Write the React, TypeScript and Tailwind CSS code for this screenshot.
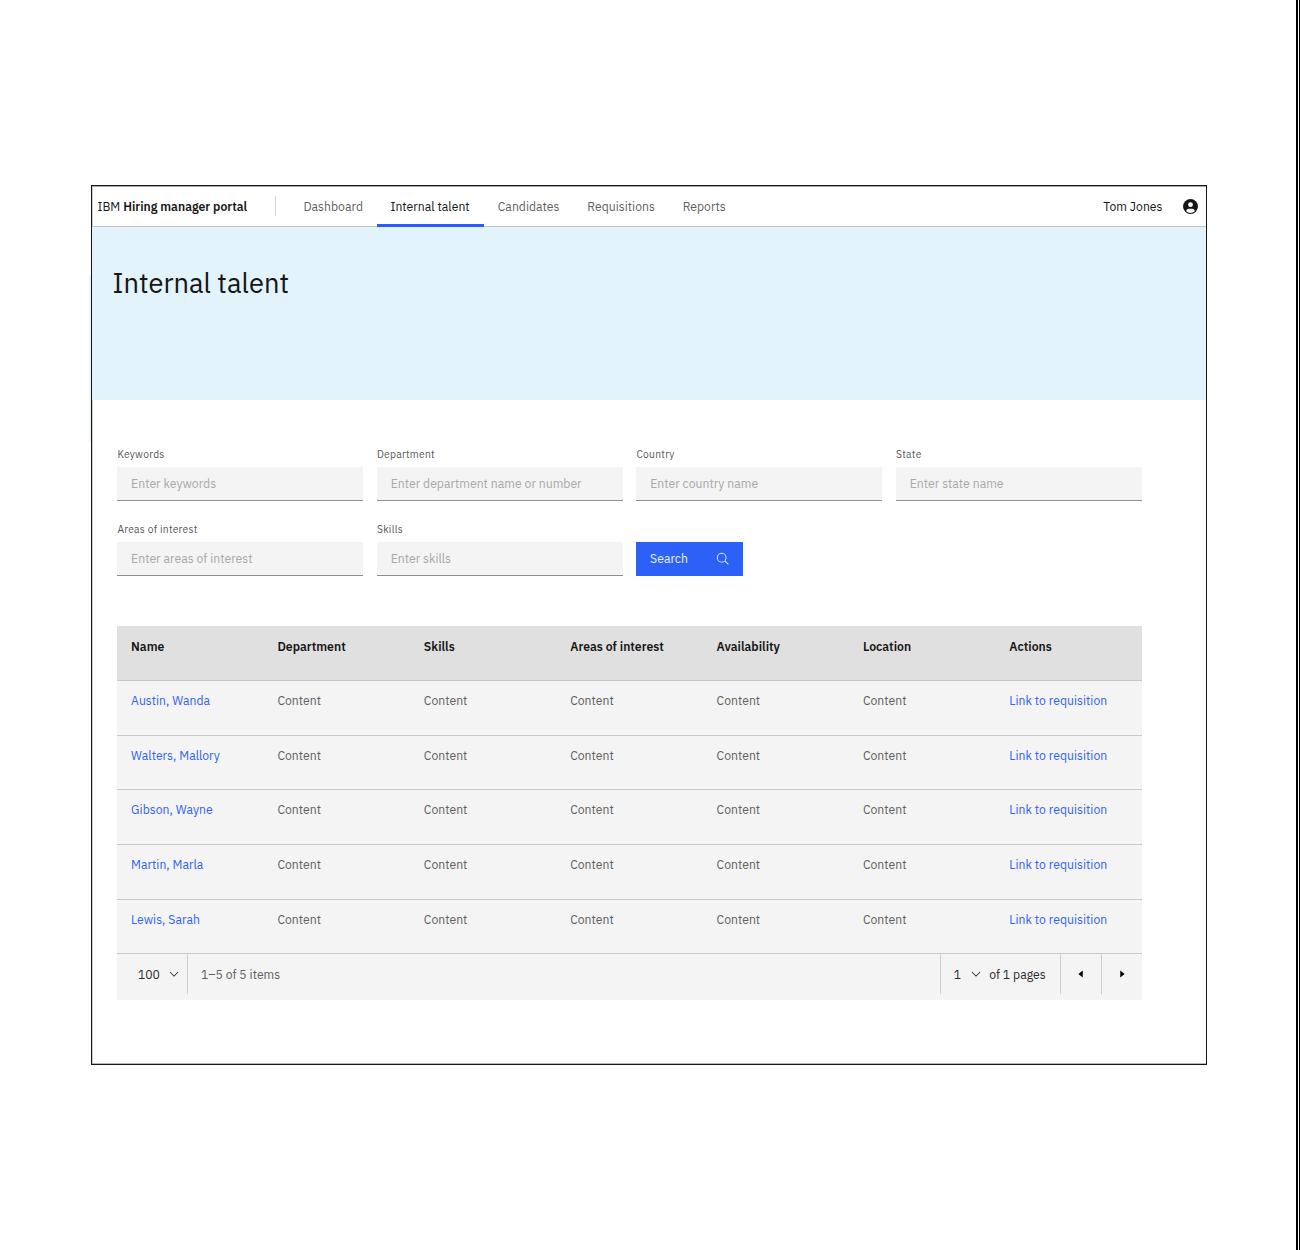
const navItems = ["Dashboard", "Internal talent", "Candidates", "Requisitions", "Reports"];

const fields = [
  { label: "Keywords", placeholder: "Enter keywords" },
  { label: "Department", placeholder: "Enter department name or number" },
  { label: "Country", placeholder: "Enter country name" },
  { label: "State", placeholder: "Enter state name" },
  { label: "Areas of interest", placeholder: "Enter areas of interest" },
  { label: "Skills", placeholder: "Enter skills" },
];

const columns = ["Name", "Department", "Skills", "Areas of interest", "Availability", "Location", "Actions"];

const people = ["Austin, Wanda", "Walters, Mallory", "Gibson, Wayne", "Martin, Marla", "Lewis, Sarah"];

function AvatarIcon() {
  return (
    <svg viewBox="0 0 32 32" className="h-[17px] w-[17px]" aria-hidden>
      <circle cx="16" cy="16" r="14" fill="#161616" />
      <circle cx="16" cy="12.5" r="4.5" fill="#fff" />
      <path
        d="M8.007 24.93A4.996 4.996 0 0 1 13 20h6a4.996 4.996 0 0 1 4.993 4.93 11.94 11.94 0 0 1-15.986 0Z"
        fill="#fff"
      />
    </svg>
  );
}

function SearchIcon() {
  return (
    <svg viewBox="0 0 32 32" className="h-[14px] w-[14px]" fill="currentColor" aria-hidden>
      <path d="M29 27.586l-7.552-7.552a11.018 11.018 0 1 0-1.414 1.414L27.586 29ZM4 13a9 9 0 1 1 9 9 9.01 9.01 0 0 1-9-9Z" />
    </svg>
  );
}

function ChevronIcon() {
  return (
    <svg viewBox="0 0 16 16" className="h-[14px] w-[14px]" fill="currentColor" aria-hidden>
      <path d="M8 11 3 6l.7-.7L8 9.6l4.3-4.3.7.7z" />
    </svg>
  );
}

function CaretIcon({ direction }: { direction: "left" | "right" }) {
  return (
    <svg viewBox="0 0 32 32" className="h-[14px] w-[14px]" aria-hidden>
      <path d={direction === "left" ? "M20 24 10 16l10-8z" : "M12 8l10 8-10 8z"} fill="#000" />
    </svg>
  );
}

function Header() {
  return (
    <header className="flex h-[41px] border-b border-[#c3c7ca] pl-[5.5px] pr-[7px]">
      <div className="flex w-[177.5px] items-center whitespace-pre pt-px text-[#161616]">
        IBM <span className="font-semibold">Hiring manager portal</span>
      </div>
      <div className="mt-[10px] h-5 w-px bg-[#d5d5d5]" />
      <nav className="ml-[13.5px] flex" aria-label="Main">
        {navItems.map((item) => (
          <a
            key={item}
            href="#"
            className={
              item === "Internal talent"
                ? "mb-[-1px] flex h-[41px] w-[107px] items-center border-b-[3px] border-[#2a5cff] px-[13.65px] pt-[3px] text-[#161616]"
                : "flex h-10 items-center px-[13.9px] pt-px text-[#5f5f5f]"
            }
          >
            {item}
          </a>
        ))}
      </nav>
      <div className="ml-auto flex items-center gap-[19.5px] text-[#161616]">
        <span className="pt-px">Tom Jones</span>
        <AvatarIcon />
      </div>
    </header>
  );
}

function SearchForm() {
  return (
    <form className="ml-[25.4px] mt-[46px] grid w-[1024.6px] grid-cols-4 gap-x-[13.6px] gap-y-[20px]">
      {fields.map(({ label, placeholder }) => (
        <label key={label} className="flex h-[55px] flex-col justify-between">
          <span className="text-[10.24px] leading-[18px] tracking-[0.27px] text-[#565656]">{label}</span>
          <input
            type="text"
            placeholder={placeholder}
            className="h-[34px] w-full border-b border-[#8f8f8f] bg-[#f4f4f4] px-[13.7px] pb-[1.5px] tracking-[0.02px] outline-none placeholder:text-[#a8a8a8]"
          />
        </label>
      ))}
      <button
        type="button"
        className="flex h-[34px] w-[106.7px] items-center justify-between self-end bg-[#2d60f6] px-[13.6px] tracking-[0.02px] text-white/90"
      >
        <span className="pb-[1.5px]">Search</span>
        <SearchIcon />
      </button>
    </form>
  );
}

function TalentTable() {
  return (
    <div className="mt-[50px] ml-[25.4px] w-[1024.6px] bg-[#f4f4f4]">
      <div className="grid h-[55.2px] grid-cols-7 border-b border-[#c6c6c6] bg-[#e0e0e0]">
        {columns.map((column) => (
          <div key={column} className="pl-[13.7px] pt-[11.4px] font-semibold leading-[18px] text-[#161616]">
            {column}
          </div>
        ))}
      </div>
      {people.map((name) => (
        <div key={name} className="grid h-[54.6px] grid-cols-7 border-b border-[#c9c9c9] pt-[10px] leading-[18px] text-[#5f5f5f]">
          <a href="#" className="pl-[13.7px] text-[#3062f5]">{name}</a>
          {columns.slice(1, -1).map((column) => (
            <span key={column} className="pl-[13.7px]">Content</span>
          ))}
          <a href="#" className="pl-[13.7px] text-[#3062f5]">Link to requisition</a>
        </div>
      ))}
      <Pagination />
    </div>
  );
}

function Pagination() {
  return (
    <div className="flex h-[46px] pb-[6px] text-[#2b2b2b]">
      <div className="flex w-[71px] items-center border-r border-[#cfcfcf] pl-[20.5px]">
        <span className="w-[29px]">100</span>
        <ChevronIcon />
      </div>
      <div className="flex items-center pl-[12.6px] text-[#5f5f5f]">1–5 of 5 items</div>
      <div className="ml-auto flex w-[121px] items-center border-x border-[#cfcfcf] pl-[12.8px]">
        <span className="w-[15px]">1</span>
        <ChevronIcon />
        <span className="ml-[6.4px]">of 1 pages</span>
      </div>
      <button type="button" aria-label="Previous page" className="flex w-[41px] items-center justify-center border-r border-[#cfcfcf]">
        <CaretIcon direction="left" />
      </button>
      <button type="button" aria-label="Next page" className="flex w-[40px] items-center justify-center">
        <CaretIcon direction="right" />
      </button>
    </div>
  );
}

export default function App() {
  return (
    <div className="flex h-[1250px] w-[1300px] overflow-hidden bg-white font-['IBM_Plex_Sans','Noto_Sans',sans-serif] text-[12.2px] tracking-[0.02px]">
      <div className="mt-[275px] ml-[89px] h-[166px] w-[2px] bg-[#edf5ff]" />
      <main className="mt-[185px] h-[880px] w-[1116px] border border-[#161616] bg-white shadow-[inset_0_1px_#a8a8a8,inset_0_-1px_#b5b5b5,inset_1px_0_#cccccc]">
        <Header />
        <div className="h-[173px] bg-[#e3f3fc] pl-[20.5px] pt-[37.5px]">
          <h1 className="text-[27.3px] leading-9 tracking-normal text-[#161616]">Internal talent</h1>
        </div>
        <SearchForm />
        <TalentTable />
      </main>
      <div className="ml-auto w-1 border-l-2 border-r border-black" />
    </div>
  );
}
